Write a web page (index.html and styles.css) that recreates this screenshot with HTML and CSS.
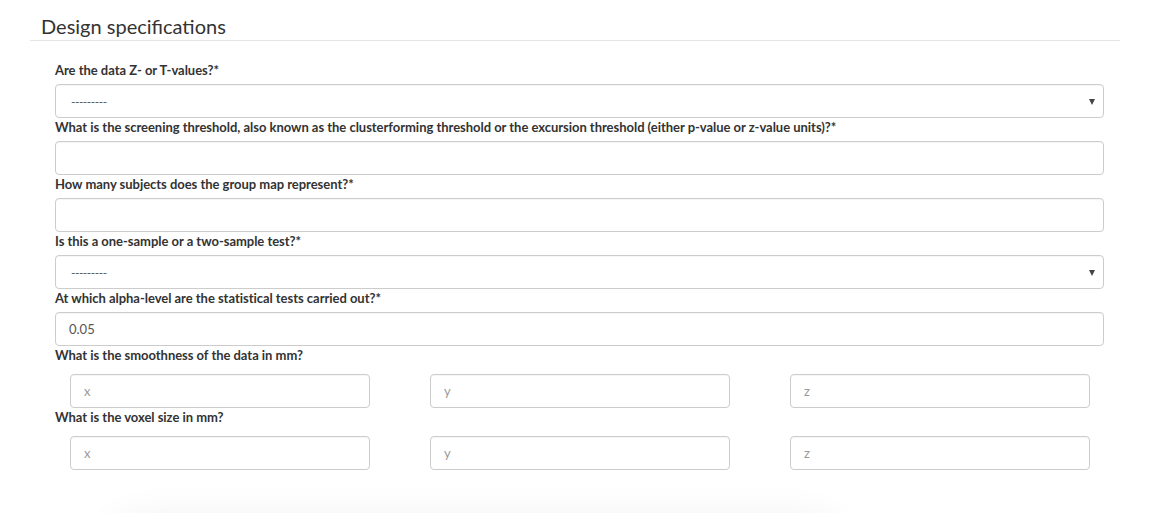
FILE: index.html
```html
<!DOCTYPE html>
<html>
<head>
<meta charset="utf-8">
<link rel="stylesheet" href="styles.css">
</head>
<body>
<div class="page">
  <h2 class="section-title">Design specifications</h2>
  <form class="form">
    <div class="field">
      <label class="label">Are the data Z- or T-values?*</label>
      <div class="select">---------<span class="caret"></span></div>
    </div>
    <div class="field">
      <label class="label">What is the screening threshold, also known as the clusterforming threshold or the excursion threshold (either p-value or z-value units)?*</label>
      <div class="input"></div>
    </div>
    <div class="field">
      <label class="label">How many subjects does the group map represent?*</label>
      <div class="input"></div>
    </div>
    <div class="field">
      <label class="label">Is this a one-sample or a two-sample test?*</label>
      <div class="select">---------<span class="caret"></span></div>
    </div>
    <div class="field">
      <label class="label">At which alpha-level are the statistical tests carried out?*</label>
      <div class="input value">0.05</div>
    </div>
    <div class="field">
      <label class="label">What is the smoothness of the data in mm?</label>
      <div class="triple">
        <div class="input small placeholder">x</div>
        <div class="input small placeholder">y</div>
        <div class="input small placeholder">z</div>
      </div>
    </div>
    <div class="field">
      <label class="label">What is the voxel size in mm?</label>
      <div class="triple">
        <div class="input small placeholder">x</div>
        <div class="input small placeholder">y</div>
        <div class="input small placeholder">z</div>
      </div>
    </div>
  </form>
  <div class="next-card"></div>
</div>
</body>
</html>
```
FILE: styles.css
```css
* { box-sizing: border-box; }
html, body { margin: 0; padding: 0; background: #fff; }
body {
  font-family: "Lato", "Liberation Sans", sans-serif;
  color: #333;
  overflow: hidden;
}
.page {
  padding: 0 33px 0 30px;
}
.section-title {
  margin: 0;
  padding: 12px 0 0 11px;
  height: 41px;
  font-size: 20px;
  font-weight: 400;
  line-height: 28px;
  color: #333;
  border-bottom: 1px solid #e6e6e6;
}
.form {
  padding: 20px 16px 0 25px;
  display: flex;
  flex-direction: column;
}
.label {
  display: block;
  font-size: 13px;
  font-weight: 700;
  line-height: 19px;
  margin-bottom: 4px;
  letter-spacing: -0.03px;
}
.select, .input {
  height: 34px;
  border: 1px solid #ccc;
  border-radius: 4px;
  box-shadow: inset 0 1px 1px rgba(0,0,0,0.04);
  background: #fff;
  font-size: 13px;
  color: #555;
  display: flex;
  align-items: center;
  padding: 0 14px;
  position: relative;
}
.select { padding-left: 15px; letter-spacing: -0.5px; font-size: 12px; }
.caret {
  position: absolute;
  right: 8px;
  top: 14px;
  width: 0; height: 0;
  border-left: 3.5px solid transparent;
  border-right: 3.5px solid transparent;
  border-top: 6px solid #444;
}
.value { padding-left: 13px; }
.triple {
  display: grid;
  grid-template-columns: 300px 300px 300px;
  column-gap: 60px;
  padding-left: 15px;
  margin-top: 9px;
}
.placeholder { color: #999; font-size: 13px; padding-left: 13px; }
.next-card {
  margin: 50px 280px 0 80px;
  height: 60px;
  border-radius: 30px;
  box-shadow: 0 0 40px rgba(0,0,0,0.07);
}
```
